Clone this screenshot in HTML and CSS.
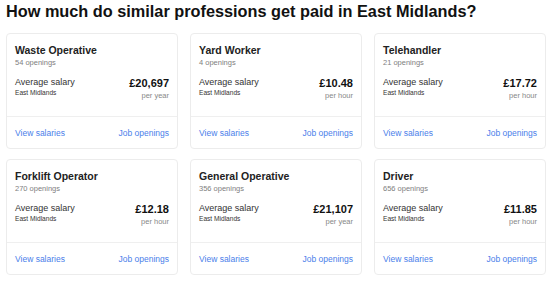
FILE: index.html
```html
<!DOCTYPE html>
<html lang="en">
<head>
    <meta charset="UTF-8">
    <title>Similar professions</title>
    <link rel="stylesheet" href="styles.css">
</head>
<body>

<h2 class="section-title">How much do similar professions get paid in East Midlands?</h2>

<div class="cards-grid">
    <div class="card">
        <div class="card-body">
            <div class="card-title">Waste Operative</div>
            <div class="card-openings">54 openings</div>
            <div class="salary-row">
                <div>
                    <div class="salary-label">Average salary</div>
                    <div class="salary-region">East Midlands</div>
                </div>
                <div class="salary-value">
                    <div class="salary-amount">£20,697</div>
                    <div class="salary-period">per year</div>
                </div>
            </div>
        </div>
        <div class="card-footer">
            <a href="#">View salaries</a>
            <a href="#">Job openings</a>
        </div>
    </div>
    <div class="card">
        <div class="card-body">
            <div class="card-title">Yard Worker</div>
            <div class="card-openings">4 openings</div>
            <div class="salary-row">
                <div>
                    <div class="salary-label">Average salary</div>
                    <div class="salary-region">East Midlands</div>
                </div>
                <div class="salary-value">
                    <div class="salary-amount">£10.48</div>
                    <div class="salary-period">per hour</div>
                </div>
            </div>
        </div>
        <div class="card-footer">
            <a href="#">View salaries</a>
            <a href="#">Job openings</a>
        </div>
    </div>
    <div class="card">
        <div class="card-body">
            <div class="card-title">Telehandler</div>
            <div class="card-openings">21 openings</div>
            <div class="salary-row">
                <div>
                    <div class="salary-label">Average salary</div>
                    <div class="salary-region">East Midlands</div>
                </div>
                <div class="salary-value">
                    <div class="salary-amount">£17.72</div>
                    <div class="salary-period">per hour</div>
                </div>
            </div>
        </div>
        <div class="card-footer">
            <a href="#">View salaries</a>
            <a href="#">Job openings</a>
        </div>
    </div>
    <div class="card">
        <div class="card-body">
            <div class="card-title">Forklift Operator</div>
            <div class="card-openings">270 openings</div>
            <div class="salary-row">
                <div>
                    <div class="salary-label">Average salary</div>
                    <div class="salary-region">East Midlands</div>
                </div>
                <div class="salary-value">
                    <div class="salary-amount">£12.18</div>
                    <div class="salary-period">per hour</div>
                </div>
            </div>
        </div>
        <div class="card-footer">
            <a href="#">View salaries</a>
            <a href="#">Job openings</a>
        </div>
    </div>
    <div class="card">
        <div class="card-body">
            <div class="card-title">General Operative</div>
            <div class="card-openings">356 openings</div>
            <div class="salary-row">
                <div>
                    <div class="salary-label">Average salary</div>
                    <div class="salary-region">East Midlands</div>
                </div>
                <div class="salary-value">
                    <div class="salary-amount">£21,107</div>
                    <div class="salary-period">per year</div>
                </div>
            </div>
        </div>
        <div class="card-footer">
            <a href="#">View salaries</a>
            <a href="#">Job openings</a>
        </div>
    </div>
    <div class="card">
        <div class="card-body">
            <div class="card-title">Driver</div>
            <div class="card-openings">656 openings</div>
            <div class="salary-row">
                <div>
                    <div class="salary-label">Average salary</div>
                    <div class="salary-region">East Midlands</div>
                </div>
                <div class="salary-value">
                    <div class="salary-amount">£11.85</div>
                    <div class="salary-period">per hour</div>
                </div>
            </div>
        </div>
        <div class="card-footer">
            <a href="#">View salaries</a>
            <a href="#">Job openings</a>
        </div>
    </div>
</div>

</body>
</html>
```

FILE: styles.css
```css
/* Similar professions salary cards */
body {
    margin: 0;
    padding: 0 8px 0 6px;
    font-family: "Liberation Sans", Arial, sans-serif;
    color: #222;
    background: #fff;
}
.section-title {
    margin: 0;
    padding-top: 1px;
    height: 32px;
    font-size: 16.3px;
    line-height: 20px;
    font-weight: bold;
    color: #111;
}
.cards-grid {
    display: grid;
    grid-template-columns: repeat(3, 172px);
    grid-auto-rows: 116px;
    column-gap: 12px;
    row-gap: 10px;
}
.card {
    display: flex;
    flex-direction: column;
    border: 1px solid #ececec;
    border-radius: 4px;
    box-sizing: border-box;
}
.card-body {
    flex: 1;
    padding: 10px 8px 0 8px;
    border-bottom: 1px solid #efefef;
}
.card-title {
    font-size: 10.5px;
    font-weight: bold;
    color: #222;
    line-height: 13px;
}
.card-openings {
    font-size: 7.5px;
    color: #808080;
    line-height: 11px;
}
.salary-row {
    display: flex;
    justify-content: space-between;
    margin-top: 9px;
}
.salary-label {
    font-size: 9px;
    color: #333;
    line-height: 11px;
}
.salary-region {
    font-size: 6.6px;
    color: #333;
    line-height: 10px;
}
.salary-value {
    text-align: right;
}
.salary-amount {
    font-size: 11px;
    font-weight: bold;
    color: #111;
    line-height: 13px;
}
.salary-period {
    font-size: 7.5px;
    color: #888;
    line-height: 11px;
}
.card-footer {
    display: flex;
    justify-content: space-between;
    padding: 0 8px;
    height: 31px;
    align-items: center;
}
.card-footer a {
    font-size: 8.5px;
    color: #4a80ea;
    text-decoration: none;
}
```
